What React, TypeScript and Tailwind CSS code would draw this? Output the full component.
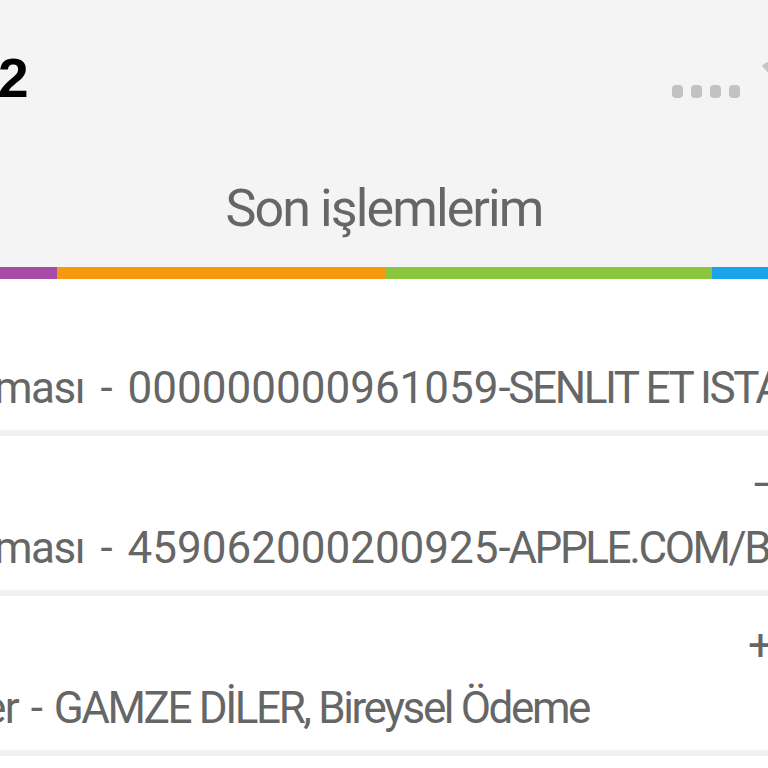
import React from 'react';

const rowFont = { fontFamily: 'Roboto, "Liberation Sans", sans-serif' };

interface Txn {
  amount: string;
  prefix: string;
  code?: string;
  rest: string;
  amountOffset: string;
}

const txns: Txn[] = [
  { amount: '−1.240,00 TL', prefix: 'ması - ', code: '000000000961059', rest: '-SENLIT ET ISTANBUL', amountOffset: 'pl-[790px]' },
  { amount: '−49,99 TL', prefix: 'ması - ', code: '459062000200925', rest: '-APPLE.COM/BILL', amountOffset: 'pl-[751px]' },
  { amount: '+500,00 TL', prefix: 'er - ', rest: 'GAMZE DİLER, Bireysel Ödeme', amountOffset: 'pl-[748px]' },
];

function Row({ t, first }: { t: Txn; first?: boolean }) {
  const isCard = t.code !== undefined;
  return (
    <div
      className={`${first ? 'h-[151px] pt-[24px]' : 'h-[154px] pt-[27px]'} flex flex-col gap-[19px] whitespace-nowrap text-[44px] leading-[44px] text-[#666666]`}
      style={rowFont}
    >
      <div className={`h-[44px] tracking-[-1.5px] ${t.amountOffset}`}>{t.amount}</div>
      <div className={`h-[44px] ${isCard ? 'ml-[-6px]' : 'ml-[-17px]'}`}>
        <span className={`tracking-[-1.5px] ${isCard ? '[word-spacing:7px]' : '[word-spacing:3px]'}`}>{t.prefix}</span>
        {isCard && <span className="tracking-[0px]">{t.code}</span>}
        <span className="tracking-[-2.4px]">{t.rest}</span>
      </div>
    </div>
  );
}

export default function App() {
  return (
    <div className="w-[768px] h-[768px] overflow-hidden bg-white">
      {/* header */}
      <div className="h-[267px] bg-[#f4f4f4] flex flex-col">
        <div className="h-[110px] flex items-start">
          <div
            className="mt-[51px] ml-[-2px] text-[55px] leading-[55px] font-bold text-black"
            style={{ fontFamily: '"Liberation Sans", Arial, sans-serif' }}
          >
            2
          </div>
          <div className="flex-1" />
          <div className="flex items-start mr-[-24px] shrink-0">
            <div className="mt-[85px] flex gap-[8px]">
              <div className="w-[11px] h-[13px] rounded-[4px] bg-[#c2c2c2]" />
              <div className="w-[11px] h-[13px] rounded-[4px] bg-[#c2c2c2]" />
              <div className="w-[11px] h-[13px] rounded-[4px] bg-[#c2c2c2]" />
              <div className="w-[11px] h-[13px] rounded-[4px] bg-[#c2c2c2]" />
            </div>
            <svg className="mt-[58px] ml-[22px] shrink-0" width="30" height="24" viewBox="0 0 30 24">
              <path d="M0 8 A21 21 0 0 1 30 8 L15 24 Z" fill="#c4c4c4" />
            </svg>
          </div>
        </div>
        <div
          className="mt-[73px] text-center text-[52px] leading-[52px] tracking-[-1.9px] text-[#666666]"
          style={{ fontFamily: 'Roboto, "Liberation Sans", sans-serif' }}
        >
          Son işlemlerim
        </div>
      </div>

      {/* colour bar */}
      <div className="h-[12px] flex">
        <div className="w-[57px] bg-[#a64ca6]" />
        <div className="w-[329px] bg-[#f59a0f]" />
        <div className="w-[326px] bg-[#8cc63f]" />
        <div className="flex-1 bg-[#1aa3e8]" />
      </div>

      {/* list */}
      <div className="flex flex-col">
        <Row t={txns[0]} first />
        <div className="h-[6px] bg-[#f1f1f1]" />
        <Row t={txns[1]} />
        <div className="h-[6px] bg-[#f1f1f1]" />
        <Row t={txns[2]} />
        <div className="h-[6px] bg-[#f1f1f1]" />
      </div>
    </div>
  );
}
